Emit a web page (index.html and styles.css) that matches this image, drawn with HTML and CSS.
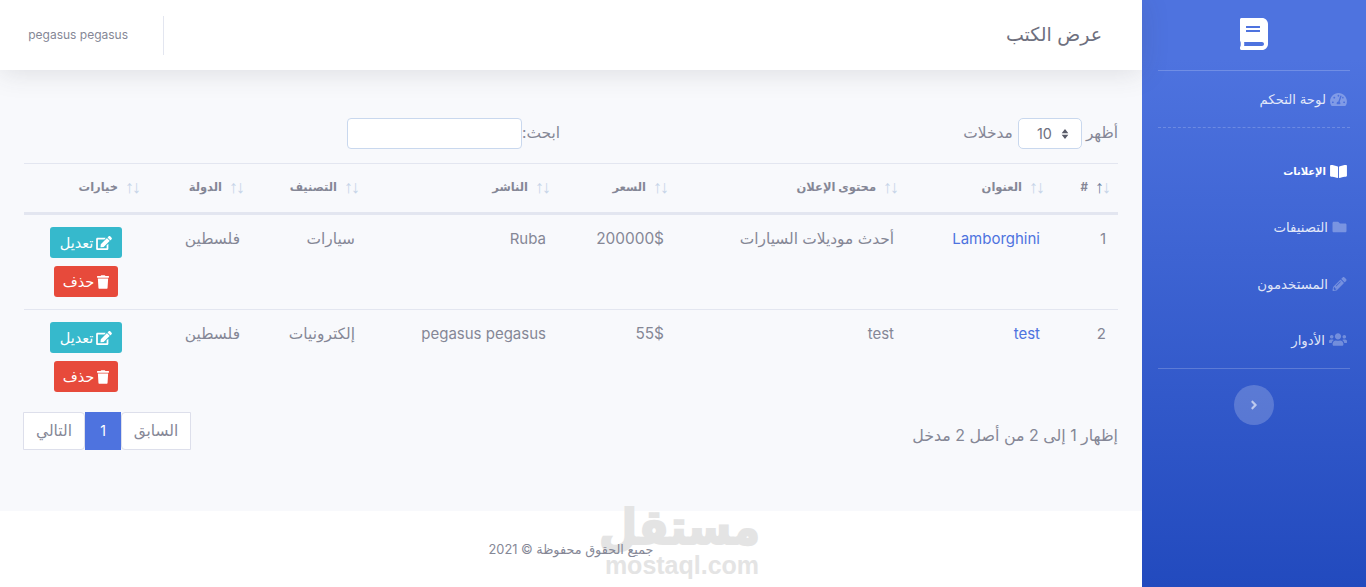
FILE: index.html
```html
<!DOCTYPE html>
<html lang="ar" dir="rtl">
<head>
    <meta charset="UTF-8">
    <meta name="viewport" content="width=device-width, initial-scale=1.0">
    <title>عرض الكتب</title>
    <link rel="stylesheet" href="styles.css">
</head>
<body>
    <aside class="sidebar">
        <div class="brand">
            <svg class="brand-icon flip" viewBox="0 0 448 512"><path d="M448 360V24c0-13.3-10.7-24-24-24H96C43 0 0 43 0 96v320c0 53 43 96 96 96h328c13.3 0 24-10.7 24-24v-16c0-7.5-3.5-14.3-8.9-18.7-4.2-15.4-4.2-59.3 0-74.7 5.4-4.3 8.9-11.1 8.9-18.6zM128 134c0-3.3 2.7-6 6-6h212c3.3 0 6 2.7 6 6v20c0 3.3-2.7 6-6 6H134c-3.3 0-6-2.7-6-6v-20zm0 64c0-3.3 2.7-6 6-6h212c3.3 0 6 2.7 6 6v20c0 3.3-2.7 6-6 6H134c-3.3 0-6-2.7-6-6v-20zm253.4 250H96c-17.7 0-32-14.3-32-32 0-17.6 14.4-32 32-32h285.4c-1.9 17.1-1.9 46.9 0 64z"/></svg>
        </div>
        <hr class="side-line">
        <a class="nav-item dash-item" href="#">
            <svg class="nav-icon icon-md" viewBox="0 0 576 512"><path d="M288 32C128.94 32 0 160.94 0 320c0 52.8 14.25 102.26 39.06 144.8 5.61 9.62 16.3 15.2 27.44 15.2h443c11.14 0 21.83-5.58 27.44-15.2C561.75 422.26 576 372.8 576 320c0-159.06-128.94-288-288-288zm0 64c14.71 0 26.58 10.13 30.32 23.65-1.11 2.26-2.64 4.23-3.45 6.67l-9.22 27.67c-5.13 3.49-10.97 6.01-17.64 6.01-17.67 0-32-14.33-32-32S270.33 96 288 96zM96 384c-17.67 0-32-14.33-32-32s14.33-32 32-32 32 14.33 32 32-14.33 32-32 32zm48-160c-17.67 0-32-14.33-32-32s14.33-32 32-32 32 14.33 32 32-14.33 32-32 32zm246.77-72.41l-61.33 184C343.13 347.33 352 364.54 352 384c0 11.72-3.38 22.55-8.88 32H232.88c-5.5-9.45-8.88-20.28-8.88-32 0-33.94 26.5-61.43 59.9-63.59l61.34-184.01c4.17-12.56 17.73-19.45 30.36-15.17 12.57 4.19 19.35 17.79 15.17 30.36zm14.66 57.2l15.52-46.55c3.47-1.29 7.13-2.23 11.05-2.23 17.67 0 32 14.33 32 32s-14.33 32-32 32c-11.38-.01-20.89-6.28-26.57-15.22zM480 384c-17.67 0-32-14.33-32-32s14.33-32 32-32 32 14.33 32 32-14.33 32-32 32z"/></svg>
            <span>لوحة التحكم</span>
        </a>
        <hr class="side-line dashed">
        <nav class="nav-list">
            <a class="nav-item active" href="#">
                <svg class="nav-icon icon-md" viewBox="0 0 576 512"><path d="M542.22 32.05c-54.8 3.11-163.72 14.43-230.96 55.59-4.64 2.84-7.27 7.89-7.27 13.17v363.87c0 11.55 12.63 18.85 23.28 13.49 69.18-34.82 169.23-44.32 218.7-46.92 16.89-.89 30.02-14.43 30.02-30.66V62.75c.01-17.71-15.35-31.74-33.77-30.7zM264.73 87.64C197.5 46.48 88.58 35.17 33.78 32.05 15.36 31.01 0 45.04 0 62.75V400.6c0 16.24 13.13 29.78 30.02 30.66 49.49 2.6 149.59 12.11 218.77 46.95 10.62 5.35 23.21-1.94 23.21-13.46V100.63c0-5.29-2.62-10.14-7.27-12.99z"/></svg>
                <span>الإعلانات</span>
            </a>
            <a class="nav-item" href="#">
                <svg class="nav-icon" viewBox="0 0 512 512"><path d="M464 128H272l-64-64H48C21.49 64 0 85.49 0 112v288c0 26.51 21.49 48 48 48h416c26.51 0 48-21.49 48-48V176c0-26.51-21.49-48-48-48z"/></svg>
                <span>التصنيفات</span>
            </a>
            <a class="nav-item" href="#">
                <svg class="nav-icon" viewBox="0 0 512 512"><path d="M497.9 142.1l-46.1 46.1c-4.7 4.7-12.3 4.7-17 0l-111-111c-4.7-4.7-4.7-12.3 0-17l46.1-46.1c18.7-18.7 49.1-18.7 67.9 0l60.1 60.1c18.8 18.7 18.8 49.1 0 67.9zM284.2 99.8L21.6 362.4.4 483.9c-2.9 16.4 11.4 30.6 27.8 27.8l121.5-21.3 262.6-262.6c4.7-4.7 4.7-12.3 0-17l-111-111c-4.8-4.7-12.4-4.7-17.1 0zM124.1 339.9c-5.5-5.5-5.5-14.3 0-19.8l154-154c5.5-5.5 14.3-5.5 19.8 0s5.5 14.3 0 19.8l-154 154c-5.5 5.5-14.3 5.5-19.8 0zM88 424h48v36.3l-64.5 11.3-31.1-31.1L51.7 376H88v48z"/></svg>
                <span>المستخدمون</span>
            </a>
            <a class="nav-item" href="#">
                <svg class="nav-icon icon-lg" viewBox="0 0 640 512"><path d="M96 224c35.3 0 64-28.7 64-64s-28.7-64-64-64-64 28.7-64 64 28.7 64 64 64zm448 0c35.3 0 64-28.7 64-64s-28.7-64-64-64-64 28.7-64 64 28.7 64 64 64zm32 32h-64c-17.6 0-33.5 7.1-45.1 18.6 40.3 22.1 68.9 62 75.1 109.4h66c17.7 0 32-14.3 32-32v-32c0-35.3-28.7-64-64-64zm-256 0c61.9 0 112-50.1 112-112S381.9 32 320 32 208 82.1 208 144s50.1 112 112 112zm76.8 32h-8.3c-20.8 10-43.9 16-68.5 16s-47.6-6-68.5-16h-8.3C179.6 288 128 339.6 128 403.2V432c0 26.5 21.5 48 48 48h288c26.5 0 48-21.5 48-48v-28.8c0-63.6-51.6-115.2-115.2-115.2zm-223.7-13.4C161.5 263.1 145.6 256 128 256H64c-35.3 0-64 28.7-64 64v32c0 17.7 14.3 32 32 32h65.9c6.3-47.4 34.9-87.3 75.2-109.4z"/></svg>
                <span>الأدوار</span>
            </a>
        </nav>
        <hr class="side-line">
        <button class="side-toggle" type="button">
            <svg viewBox="0 0 256 512"><path d="M224.3 273l-136 136c-9.4 9.4-24.6 9.4-33.9 0l-22.6-22.6c-9.4-9.4-9.4-24.6 0-33.9l96.4-96.4-96.4-96.4c-9.4-9.4-9.4-24.6 0-33.9L54.3 103c9.4-9.4 24.6-9.4 33.9 0l136 136c9.5 9.4 9.5 24.6.1 34z"/></svg>
        </button>
    </aside>

    <div class="main">
        <header class="topbar">
            <h1 class="page-title">عرض الكتب</h1>
            <div class="user-box">
                <span class="user-divider"></span>
                <span class="user-name">pegasus pegasus</span>
            </div>
        </header>

        <section class="content">
            <div class="table-controls">
                <label class="length-box">
                    <span>أظهر</span>
                    <select class="length-select">
                        <option>10</option>
                    </select>
                    <span>مدخلات</span>
                </label>
                <label class="search-box">
                    <span>ابحث:</span>
                    <input class="search-input" type="search">
                </label>
            </div>

            <table class="data-table">
                <colgroup>
                    <col class="col-id">
                    <col class="col-title">
                    <col class="col-body">
                    <col class="col-price">
                    <col class="col-pub">
                    <col class="col-cat">
                    <col class="col-country">
                    <col class="col-opts">
                </colgroup>
                <thead>
                    <tr>
                        <th><div class="th-in"><span class="sort"><i class="on">↑</i><i>↓</i></span>#</div></th>
                        <th><div class="th-in"><span class="sort"><i>↑</i><i>↓</i></span>العنوان</div></th>
                        <th><div class="th-in"><span class="sort"><i>↑</i><i>↓</i></span>محتوى الإعلان</div></th>
                        <th><div class="th-in"><span class="sort"><i>↑</i><i>↓</i></span>السعر</div></th>
                        <th><div class="th-in"><span class="sort"><i>↑</i><i>↓</i></span>الناشر</div></th>
                        <th><div class="th-in"><span class="sort"><i>↑</i><i>↓</i></span>التصنيف</div></th>
                        <th><div class="th-in"><span class="sort"><i>↑</i><i>↓</i></span>الدولة</div></th>
                        <th><div class="th-in"><span class="sort"><i>↑</i><i>↓</i></span>خيارات</div></th>
                    </tr>
                </thead>
                <tbody>
                    <tr>
                        <td class="lat">1</td>
                        <td class="lat"><a class="book-link" href="#">Lamborghini</a></td>
                        <td>أحدث موديلات السيارات</td>
                        <td>200000$</td>
                        <td class="lat">Ruba</td>
                        <td>سيارات</td>
                        <td>فلسطين</td>
                        <td class="opts">
                            <a class="btn btn-edit" href="#"><svg viewBox="0 0 576 512"><path d="M402.6 83.2l90.2 90.2c3.8 3.8 3.8 10 0 13.8L274.4 405.6l-92.8 10.3c-12.4 1.4-22.9-9.1-21.5-21.5l10.3-92.8L388.8 83.2c3.8-3.8 10-3.8 13.8 0zm162-22.9l-48.8-48.8c-15.2-15.2-39.9-15.2-55.2 0l-35.4 35.4c-3.8 3.8-3.8 10 0 13.8l90.2 90.2c3.8 3.8 10 3.8 13.8 0l35.4-35.4c15.2-15.3 15.2-40 0-55.2zM384 346.2V448H64V128h229.8c3.2 0 6.2-1.3 8.5-3.5l40-40c7.6-7.6 2.2-20.5-8.5-20.5H48C21.5 64 0 85.5 0 112v352c0 26.5 21.5 48 48 48h352c26.5 0 48-21.5 48-48V306.2c0-10.7-12.9-16-20.5-8.5l-40 40c-2.2 2.3-3.5 5.3-3.5 8.5z"/></svg>تعديل</a>
                            <a class="btn btn-delete" href="#"><svg viewBox="0 0 448 512"><path d="M432 32H312l-9.4-18.7A24 24 0 0 0 281.1 0H166.8a23.72 23.72 0 0 0-21.4 13.3L136 32H16A16 16 0 0 0 0 48v32a16 16 0 0 0 16 16h416a16 16 0 0 0 16-16V48a16 16 0 0 0-16-16zM53.2 467a48 48 0 0 0 47.9 45h245.8a48 48 0 0 0 47.9-45L416 128H32z"/></svg>حذف</a>
                        </td>
                    </tr>
                    <tr>
                        <td class="lat">2</td>
                        <td class="lat"><a class="book-link" href="#">test</a></td>
                        <td class="lat">test</td>
                        <td>55$</td>
                        <td class="lat">pegasus pegasus</td>
                        <td>إلكترونيات</td>
                        <td>فلسطين</td>
                        <td class="opts">
                            <a class="btn btn-edit" href="#"><svg viewBox="0 0 576 512"><path d="M402.6 83.2l90.2 90.2c3.8 3.8 3.8 10 0 13.8L274.4 405.6l-92.8 10.3c-12.4 1.4-22.9-9.1-21.5-21.5l10.3-92.8L388.8 83.2c3.8-3.8 10-3.8 13.8 0zm162-22.9l-48.8-48.8c-15.2-15.2-39.9-15.2-55.2 0l-35.4 35.4c-3.8 3.8-3.8 10 0 13.8l90.2 90.2c3.8 3.8 10 3.8 13.8 0l35.4-35.4c15.2-15.3 15.2-40 0-55.2zM384 346.2V448H64V128h229.8c3.2 0 6.2-1.3 8.5-3.5l40-40c7.6-7.6 2.2-20.5-8.5-20.5H48C21.5 64 0 85.5 0 112v352c0 26.5 21.5 48 48 48h352c26.5 0 48-21.5 48-48V306.2c0-10.7-12.9-16-20.5-8.5l-40 40c-2.2 2.3-3.5 5.3-3.5 8.5z"/></svg>تعديل</a>
                            <a class="btn btn-delete" href="#"><svg viewBox="0 0 448 512"><path d="M432 32H312l-9.4-18.7A24 24 0 0 0 281.1 0H166.8a23.72 23.72 0 0 0-21.4 13.3L136 32H16A16 16 0 0 0 0 48v32a16 16 0 0 0 16 16h416a16 16 0 0 0 16-16V48a16 16 0 0 0-16-16zM53.2 467a48 48 0 0 0 47.9 45h245.8a48 48 0 0 0 47.9-45L416 128H32z"/></svg>حذف</a>
                        </td>
                    </tr>
                </tbody>
            </table>

            <div class="table-footer">
                <div class="table-info">إظهار 1 إلى 2 من أصل 2 مدخل</div>
                <div class="pagination">
                    <a class="page-link first" href="#">السابق</a>
                    <a class="page-link current" href="#">1</a>
                    <a class="page-link last" href="#">التالي</a>
                </div>
            </div>
        </section>

        <footer class="footer">
            <span class="copyright">جميع الحقوق محفوظة © 2021</span>
            <div class="watermark">
                <div class="wm-ar">مستقل</div>
                <div class="wm-en">mostaql.com</div>
            </div>
        </footer>
    </div>
</body>
</html>
```

FILE: styles.css
```css
* {
    box-sizing: border-box;
}
body {
    margin: 0;
    height: 100vh;
    overflow: hidden;
    display: flex;
    font-family: Inter, "DejaVu Sans", sans-serif;
    font-size: 15.4px;
    color: #858796;
    background: #f8f9fc;
}
.flip {
    transform: scaleX(-1);
}

/* sidebar */
.sidebar {
    width: 224px;
    flex-shrink: 0;
    padding: 0 16px;
    display: flex;
    flex-direction: column;
    background: linear-gradient(180deg, #4e73df 10%, #224abe 100%);
}
.brand {
    height: 70px;
    display: flex;
    align-items: center;
    justify-content: center;
}
.brand-icon {
    width: 28px;
    height: 32px;
    fill: #fff;
    margin-top: -2px;
}
.side-line {
    width: 100%;
    margin: 0;
    border: 0;
    border-top: 1px solid rgba(255,255,255,0.2);
}
.side-line.dashed {
    border-top-style: dashed;
}
.nav-list {
    padding-top: 15px;
}
.nav-item {
    height: 56.25px;
    display: flex;
    align-items: center;
    gap: 4px;
    padding-right: 3px;
    font-size: 13.3px;
    color: rgba(255,255,255,0.85);
    text-decoration: none;
}
.dash-item {
    height: 56px;
}
.nav-item.active {
    color: #fff;
    font-weight: 700;
    font-size: 10px;
}
.nav-icon {
    width: 15px;
    height: 14px;
    flex-shrink: 0;
    fill: rgba(255,255,255,0.3);
}
.icon-md {
    width: 17px;
    height: 15px;
}
.icon-lg {
    width: 18px;
    height: 15px;
}
.nav-item.active .nav-icon {
    fill: #fff;
}
.side-toggle {
    width: 40px;
    height: 40px;
    margin: 16px auto 0;
    padding: 0;
    border: 0;
    border-radius: 50%;
    background: rgba(255,255,255,0.2);
    display: flex;
    align-items: center;
    justify-content: center;
}
.side-toggle svg {
    width: 8px;
    height: 14px;
    fill: rgba(255,255,255,0.6);
}

/* main area */
.main {
    flex: 1;
    min-width: 0;
    display: flex;
    flex-direction: column;
}
.topbar {
    height: 70px;
    flex-shrink: 0;
    padding: 0 40px 0 28px;
    display: flex;
    align-items: center;
    justify-content: space-between;
    background: #fff;
    box-shadow: 0 2px 28px rgba(58,59,69,0.15);
    position: relative;
}
.page-title {
    margin: -2px 0 0;
    font-size: 19px;
    font-weight: 400;
    color: #6e707e;
}
.user-box {
    display: flex;
    align-items: center;
    gap: 35px;
}
.user-divider {
    width: 1px;
    height: 39px;
    background: #e3e6f0;
}
.user-name {
    width: 100px;
    margin-top: -2px;
    font-size: 12px;
    white-space: nowrap;
    color: #858796;
}
.content {
    flex: 1;
    padding: 48px 24px 0;
}
.table-controls {
    height: 31px;
    display: flex;
    justify-content: space-between;
}
.length-box,
.search-box {
    display: flex;
    align-items: center;
    margin-top: -2px;
}
.length-box {
    gap: 4px;
}
.search-box {
    margin-left: 323px;
}
.length-select {
    width: 64px;
    height: 31px;
    margin: 2px 0 0 1px;
    padding: 0 29px 0 0;
    appearance: none;
    border: 1px solid #c9d8ee;
    border-radius: 5px;
    font: inherit;
    font-size: 14.4px;
    color: #6e707e;
    background: #fff url("data:image/svg+xml,%3Csvg xmlns='http://www.w3.org/2000/svg' viewBox='0 0 8 12'%3E%3Cpath d='M4 0l4 5H0zM4 12L0 7h8z' fill='%235a5c69'/%3E%3C/svg%3E") no-repeat right 12px center / 8px 10px;
}
.search-input {
    width: 175px;
    height: 31px;
    margin-top: 2px;
    border: 1px solid #c9d8ee;
    border-radius: 4px;
    background: #fff;
}

/* table */
.data-table {
    width: 100%;
    margin-top: 14px;
    table-layout: fixed;
    border-collapse: collapse;
    border-top: 1px solid #e3e6f0;
}
.col-id { width: 66px; }
.col-title { width: 146px; }
.col-body { width: 230px; }
.col-price { width: 118px; }
.col-pub { width: 191px; }
.col-cat { width: 115px; }
.col-country { width: 104px; }
.col-opts { width: 124px; }
.data-table th {
    height: 50px;
    padding: 0 8px 2px;
    font-size: 11.5px;
    font-weight: 700;
    color: #858796;
    text-align: right;
    border-bottom: 3px solid #e3e6f0;
}
.th-in {
    display: flex;
    align-items: center;
    gap: 8px;
}
.sort {
    display: flex;
    direction: ltr;
    width: 14px;
    height: 14px;
    align-items: center;
    justify-content: center;
    font-family: "Liberation Sans", sans-serif;
    font-size: 18px;
    line-height: 14px;
    font-weight: 400;
}
.sort i {
    width: 7px;
    display: flex;
    justify-content: center;
    font-style: normal;
    color: #c6d4e8;
}
.sort i.on {
    color: #6e7f9c;
}
.data-table td {
    height: 96px;
    padding: 14px 12px;
    vertical-align: top;
    text-align: right;
}
.data-table td.lat {
    font-size: 15px;
}
.data-table tbody tr:first-child td {
    border-bottom: 1px solid #e3e6f0;
}
.book-link {
    color: #4e73df;
    text-decoration: none;
}
.data-table td.opts {
    padding: 12px 12px 0;
    text-align: center;
}
.btn {
    height: 31px;
    margin: 0 auto 8px;
    display: flex;
    align-items: center;
    justify-content: center;
    gap: 3px;
    border-radius: 3px;
    font-size: 14.5px;
    color: #fff;
    text-decoration: none;
}
.btn svg {
    height: 14px;
    fill: #fff;
}
.btn-edit {
    width: 72px;
    background: #36b9cc;
}
.btn-edit svg {
    width: 16px;
}
.btn-delete {
    width: 64px;
    background: #e74a3b;
}
.btn-delete svg {
    width: 12px;
}

/* info + pagination */
.table-footer {
    margin-top: 6px;
    display: flex;
    justify-content: space-between;
}
.table-info {
    padding-top: 14px;
    font-size: 15.9px;
}
.pagination {
    margin-left: -1px;
    display: flex;
    height: 38px;
}
.page-link {
    display: flex;
    align-items: center;
    justify-content: center;
    background: #fff;
    border: 1px solid #dddfeb;
    color: #858796;
    text-decoration: none;
}
.page-link.first {
    width: 70px;
    border-radius: 4px 0 0 4px;
}
.page-link.current {
    width: 36px;
    background: #4e73df;
    border-color: #4e73df;
    color: #fff;
    font-size: 14px;
}
.page-link.last {
    width: 62px;
    border-radius: 0 4px 4px 0;
}

/* footer */
.footer {
    height: 76px;
    flex-shrink: 0;
    display: flex;
    align-items: center;
    justify-content: center;
    background: #fff;
    font-size: 12.8px;
    position: relative;
}
.copyright {
    position: relative;
    z-index: 1;
}
.watermark {
    position: absolute;
    left: 604px;
    top: -8px;
    width: 156px;
    text-align: center;
    color: #e4e4e4;
    font-weight: 700;
    line-height: 1;
}
.wm-ar {
    height: 50px;
    font-family: "DejaVu Sans", sans-serif;
    font-size: 44px;
    -webkit-text-stroke: 2px #e4e4e4;
    transform: scaleY(1.1);
    transform-origin: top;
}
.wm-en {
    font-family: "Liberation Sans", sans-serif;
    font-size: 25px;
    direction: ltr;
}
```
